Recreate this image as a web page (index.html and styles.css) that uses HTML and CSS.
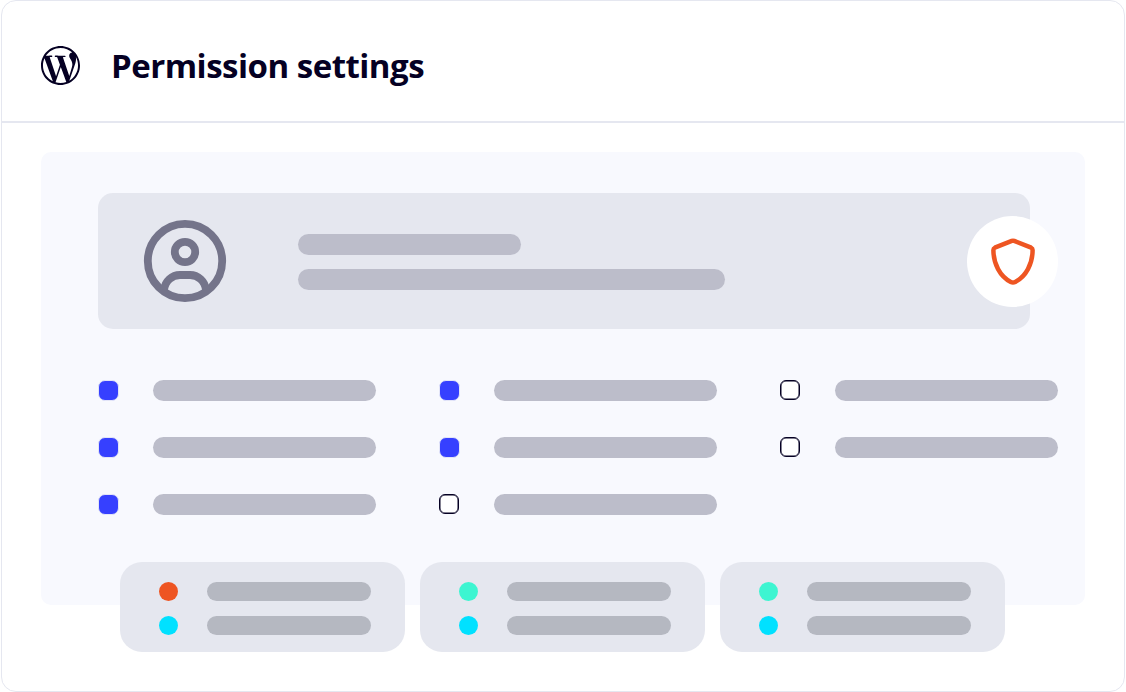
FILE: index.html
```
<!DOCTYPE html>
<html lang="en">
<head>
  <meta charset="UTF-8">
  <meta name="viewport" content="width=device-width, initial-scale=1.0">
  <title>Permission settings</title>
  <link rel="stylesheet" href="styles.css">
</head>
<body>
  <div class="window">
    <header class="header">
      <svg class="logo" viewBox="0 0 24 24" fill="currentColor">
        <path d="M21.469 6.825c.84 1.537 1.318 3.3 1.318 5.175 0 3.979-2.156 7.456-5.363 9.325l3.295-9.527c.615-1.54.82-2.771.82-3.864 0-.405-.026-.78-.07-1.11m-7.981.105c.647-.03 1.232-.105 1.232-.105.582-.075.514-.93-.067-.899 0 0-1.755.135-2.88.135-1.064 0-2.85-.15-2.85-.15-.585-.03-.661.855-.075.885 0 0 .54.061 1.125.09l1.68 4.605-2.37 7.08L5.354 6.9c.649-.03 1.234-.1 1.234-.1.585-.075.516-.93-.065-.896 0 0-1.746.138-2.874.138-.2 0-.438-.008-.69-.015C4.911 3.15 8.235 1.215 12 1.215c2.809 0 5.365 1.072 7.286 2.833-.046-.003-.091-.009-.141-.009-1.06 0-1.812.923-1.812 1.914 0 .89.513 1.643 1.06 2.531.411.72.89 1.643.89 2.977 0 .915-.354 1.994-.821 3.479l-1.075 3.585-3.9-11.61.001.014zM12 22.784c-1.059 0-2.081-.153-3.048-.437l3.237-9.406 3.315 9.087c.024.053.05.101.078.149-1.12.393-2.325.609-3.582.609M1.211 12c0-1.564.336-3.05.935-4.39L7.29 21.709C3.694 19.96 1.212 16.271 1.211 12M12 0C5.385 0 0 5.385 0 12s5.385 12 12 12 12-5.385 12-12S18.615 0 12 0"/>
      </svg>
      <h1>Permission settings</h1>
    </header>
    <main class="panel">
      <div class="user-card">
        <svg class="avatar" viewBox="0 0 84 84" fill="none" stroke="currentColor" stroke-width="7.8">
          <circle cx="42" cy="42" r="37.2"/>
          <circle cx="42" cy="33" r="10.2"/>
          <path d="M21 71c1-9 8-15 16-15h10c8 0 15 6 16 15"/>
        </svg>
        <div class="user-lines">
          <div class="bar"></div>
          <div class="bar bar-long"></div>
        </div>
        <div class="badge">
          <svg viewBox="0 0 46 48" fill="none" stroke="currentColor" stroke-width="4.5" stroke-linejoin="round">
            <path d="M21.8 2.9q1.2-.5 2.4 0l17 6.8q1.4.6 1.4 2.2C42.6 26 36 38.5 25.2 44q-2.2 1.1-4.4 0C10 38.5 3.4 26 3.4 11.9q0-1.6 1.4-2.2z"/>
          </svg>
        </div>
      </div>
      <div class="permissions">
        <div class="column">
          <div class="option"><span class="check checked"></span><span class="bar"></span></div>
          <div class="option"><span class="check checked"></span><span class="bar"></span></div>
          <div class="option"><span class="check checked"></span><span class="bar"></span></div>
        </div>
        <div class="column">
          <div class="option"><span class="check checked"></span><span class="bar"></span></div>
          <div class="option"><span class="check checked"></span><span class="bar"></span></div>
          <div class="option"><span class="check"></span><span class="bar"></span></div>
        </div>
        <div class="column">
          <div class="option"><span class="check"></span><span class="bar"></span></div>
          <div class="option"><span class="check"></span><span class="bar"></span></div>
        </div>
      </div>
      <div class="cards">
        <div class="card">
          <div class="status"><span class="dot orange"></span><span class="line"></span></div>
          <div class="status"><span class="dot cyan"></span><span class="line"></span></div>
        </div>
        <div class="card">
          <div class="status"><span class="dot green"></span><span class="line"></span></div>
          <div class="status"><span class="dot cyan"></span><span class="line"></span></div>
        </div>
        <div class="card">
          <div class="status"><span class="dot green"></span><span class="line"></span></div>
          <div class="status"><span class="dot cyan"></span><span class="line"></span></div>
        </div>
      </div>
    </main>
  </div>
</body>
</html>
```
FILE: styles.css
```
* {
  box-sizing: border-box;
}
body {
  margin: 0;
  padding: 0 1px;
  background: white;
  font-family: "Open Sans", "Noto Sans", sans-serif;
  color: #050023;
}
.window {
  height: 692px;
  border: 1px solid #e5e7f0;
  border-radius: 15px;
}
.header {
  display: flex;
  align-items: center;
  gap: 31px;
  height: 122px;
  padding: 8px 39px 0;
  border-bottom: 2px solid #e5e7f0;
}
.logo {
  width: 39px;
  height: 39px;
}
h1 {
  margin: 0;
  padding-top: 2px;
  font-size: 33px;
  font-weight: 700;
  line-height: 40px;
  letter-spacing: -0.5px;
  white-space: nowrap;
}
.panel {
  width: 1044px;
  height: 453px;
  margin: 29px 0 0 39px;
  padding: 41px 27px 0 57px;
  background: #f8f9fe;
  border-radius: 10px;
}
.user-card {
  display: flex;
  align-items: center;
  position: relative;
  width: 932px;
  height: 136px;
  padding-left: 45px;
  background: #e5e7ef;
  border-radius: 15px;
}
.avatar {
  width: 84px;
  height: 84px;
  color: #74748a;
}
.user-lines {
  display: flex;
  flex-direction: column;
  gap: 14px;
  margin-left: 71px;
  padding-top: 2px;
}
.bar {
  width: 223px;
  height: 21px;
  background: #bcbdca;
  border-radius: 11px;
}
.bar-long {
  width: 427px;
}
.badge {
  display: flex;
  align-items: center;
  justify-content: center;
  position: absolute;
  top: 23px;
  right: -28px;
  width: 91px;
  height: 91px;
  background: white;
  border-radius: 50%;
  color: #ee5522;
}
.badge svg {
  width: 46px;
  height: 48px;
}
.permissions {
  display: flex;
  gap: 63px;
  margin-top: 51px;
}
.column {
  display: flex;
  flex-direction: column;
  gap: 36px;
}
.option {
  display: flex;
  align-items: center;
  justify-content: space-between;
  width: 278px;
  height: 21px;
}
.check {
  width: 20px;
  height: 20px;
  margin-bottom: 1px;
  background: white;
  border: 1px solid #050023;
  border-radius: 6px;
  box-shadow: inset 0 0 0 0.5px #050023;
}
.checked {
  width: 21px;
  height: 21px;
  margin-bottom: 0;
  background: #3640ff;
  border-color: #e3e5f8;
  border-radius: 7px;
  box-shadow: none;
}
.cards {
  display: flex;
  gap: 15px;
  margin: 47px 0 0 22px;
}
.card {
  display: flex;
  flex-direction: column;
  gap: 15px;
  width: 285px;
  height: 90px;
  padding: 20px 34px 0 39px;
  background: #e5e7ef;
  border-radius: 22px;
}
.status {
  display: flex;
  align-items: center;
  gap: 29px;
}
.dot {
  width: 19px;
  height: 19px;
  border-radius: 50%;
}
.line {
  width: 164px;
  height: 19px;
  background: #b5b8c1;
  border-radius: 10px;
}
.orange {
  background: #ee5522;
}
.green {
  background: #3df5d1;
}
.cyan {
  background: #00e1ff;
}
```
